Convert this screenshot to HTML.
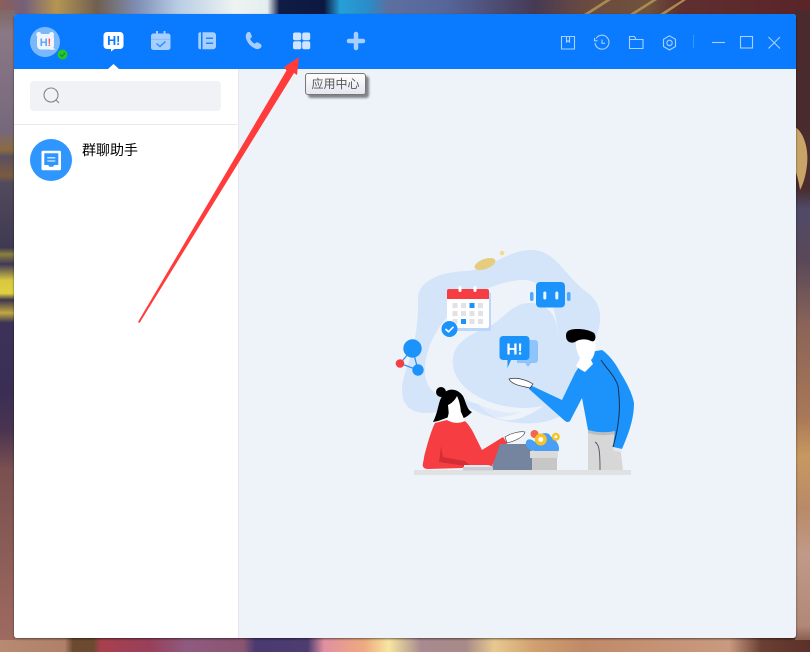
<!DOCTYPE html>
<html lang="zh">
<head>
<meta charset="utf-8">
<title>应用中心</title>
<style>
html,body{margin:0;padding:0;width:810px;height:652px;overflow:hidden;background:#5a4050;}
svg{position:absolute;left:0;top:0;display:block;}
.t{position:absolute;font-family:"Liberation Sans","Noto Sans CJK SC",sans-serif;white-space:nowrap;}
#tip{position:absolute;left:305px;top:73px;width:59px;height:20px;box-sizing:content-box;border:1px solid #777;border-radius:3px;background:linear-gradient(#fff,#e4e5f0);box-shadow:3px 3px 2px rgba(70,70,70,.65);font:12px/20px "Liberation Sans","Noto Sans CJK SC",sans-serif;color:#575757;text-align:center;}
</style>
</head>
<body>
<svg width="810" height="652" viewBox="0 0 810 652" xmlns="http://www.w3.org/2000/svg" font-family="'Liberation Sans',sans-serif">
<defs>
<linearGradient id="top" x1="0" x2="810" y1="0" y2="0" gradientUnits="userSpaceOnUse">
<stop offset="0" stop-color="#8a5f58"/><stop offset=".03" stop-color="#75607a"/><stop offset=".07" stop-color="#b59552"/><stop offset=".12" stop-color="#6f5f50"/><stop offset=".17" stop-color="#7f8fb6"/><stop offset=".22" stop-color="#b8cde4"/><stop offset=".29" stop-color="#eef3f2"/><stop offset=".33" stop-color="#e4eef0"/><stop offset=".345" stop-color="#101c44"/><stop offset=".4" stop-color="#0d1840"/><stop offset=".42" stop-color="#26a0d8"/><stop offset=".455" stop-color="#2a8cc8"/><stop offset=".48" stop-color="#5d6f9f"/><stop offset=".55" stop-color="#56669a"/><stop offset=".66" stop-color="#463a55"/><stop offset=".72" stop-color="#6a4a40"/><stop offset=".8" stop-color="#70523c"/><stop offset=".84" stop-color="#602f30"/><stop offset="1" stop-color="#5a2428"/>
</linearGradient>
<linearGradient id="bot" x1="0" x2="810" y1="0" y2="0" gradientUnits="userSpaceOnUse">
<stop offset="0" stop-color="#b88a72"/><stop offset=".08" stop-color="#b08068"/><stop offset=".09" stop-color="#6b4a30"/><stop offset=".115" stop-color="#6b4a30"/><stop offset=".125" stop-color="#a8404e"/><stop offset=".185" stop-color="#98405a"/><stop offset=".23" stop-color="#8f5a80"/><stop offset=".3" stop-color="#8a5570"/><stop offset=".315" stop-color="#4a3a70"/><stop offset=".38" stop-color="#4e3c70"/><stop offset=".4" stop-color="#e090a0"/><stop offset=".45" stop-color="#eeaa80"/><stop offset=".48" stop-color="#f8e6a0"/><stop offset=".52" stop-color="#a88a90"/><stop offset=".575" stop-color="#a88a88"/><stop offset=".61" stop-color="#e8c890"/><stop offset=".66" stop-color="#d0a070"/><stop offset=".72" stop-color="#c08a68"/><stop offset=".9" stop-color="#c99a80"/><stop offset=".94" stop-color="#6a4034"/><stop offset="1" stop-color="#5a3028"/>
</linearGradient>
<linearGradient id="lft" x1="0" x2="0" y1="0" y2="652" gradientUnits="userSpaceOnUse">
<stop offset="0" stop-color="#7d5f55"/><stop offset=".05" stop-color="#8a7886"/><stop offset=".2" stop-color="#76687c"/><stop offset=".23" stop-color="#8a6a40"/><stop offset=".24" stop-color="#5a5060"/><stop offset=".27" stop-color="#7a5a40"/><stop offset=".28" stop-color="#524a5c"/><stop offset=".38" stop-color="#3f3a52"/><stop offset=".39" stop-color="#8a8040"/><stop offset=".405" stop-color="#3f3858"/><stop offset=".43" stop-color="#d8c840"/><stop offset=".45" stop-color="#e0d040"/><stop offset=".46" stop-color="#3e3650"/><stop offset=".48" stop-color="#c0a840"/><stop offset=".495" stop-color="#3c3258"/><stop offset=".6" stop-color="#3a2e55"/><stop offset=".66" stop-color="#4a3450"/><stop offset=".72" stop-color="#7a5050"/><stop offset="1" stop-color="#a06c60"/>
</linearGradient>
<linearGradient id="rgt" x1="0" x2="0" y1="0" y2="652" gradientUnits="userSpaceOnUse">
<stop offset="0" stop-color="#4a2a2c"/><stop offset=".29" stop-color="#4a2c2e"/><stop offset=".32" stop-color="#4f4a68"/><stop offset=".4" stop-color="#5a4858"/><stop offset=".5" stop-color="#8a6458"/><stop offset=".64" stop-color="#a87858"/><stop offset=".7" stop-color="#c89860"/><stop offset=".78" stop-color="#b88a68"/><stop offset=".85" stop-color="#c09a88"/><stop offset=".96" stop-color="#b08878"/><stop offset="1" stop-color="#6a3a30"/>
</linearGradient>
<filter id="sh" x="-3%" y="-3%" width="106%" height="106%"><feDropShadow dx="0" dy="1" stdDeviation="1" flood-color="#000" flood-opacity=".55"/></filter>
<filter id="soft" x="-5%" y="-5%" width="110%" height="110%"><feGaussianBlur stdDeviation=".35"/></filter>
<clipPath id="win"><rect x="14" y="14" width="782" height="624" rx="3"/></clipPath>
</defs>

<!-- wallpaper strips -->
<rect x="0" y="0" width="810" height="15" fill="url(#top)"/>
<rect x="0" y="636" width="810" height="16" fill="url(#bot)"/>
<rect x="0" y="10" width="15" height="630" fill="url(#lft)"/>
<rect x="795" y="10" width="15" height="630" fill="url(#rgt)"/>
<path d="M795 127C804 132 809 150 807 165C806 175 803 185 800 190C799 182 797 175 795 170z" fill="#c8a468"/>
<path d="M584 14L606 0h5L589 14zM630 14L652 0h5L635 14zM660 14L682 0h4L665 14z" fill="#a98a50"/>

<!-- window -->
<rect x="14" y="14" width="782" height="624" rx="3" fill="#eef3fa" filter="url(#sh)"/>
<g clip-path="url(#win)">
<rect x="14" y="69" width="224" height="569" fill="#fff"/>
<rect x="238" y="69" width="1" height="569" fill="#e4e7ec"/>
<rect x="14" y="14" width="782" height="55" fill="#0a7bff"/>
</g>

<!-- avatar -->
<circle cx="45" cy="42" r="15" fill="#79b9fb"/>
<circle cx="38.800" cy="34.500" r="2.500" fill="#eef5fe"/>
<circle cx="51.500" cy="34.500" r="2.500" fill="#eef5fe"/>
<rect x="37" y="34" width="17" height="15.500" rx="4" fill="#eef5fe"/>
<path d="M51 46l4.500 3.500-5 .5z" fill="#eef5fe"/>
<text x="39.800" y="46" font-size="11" font-weight="700" fill="#5aa5f5">H</text>
<text x="47.500" y="46" font-size="11" font-weight="700" fill="#f25a5a">!</text>
<circle cx="62.500" cy="54.500" r="5" fill="#27c527"/>
<path d="M60 54.500l2 2 3-3.500" fill="none" stroke="#0f8a3a" stroke-width="1"/>

<!-- H! tab -->
<path d="M107 32h13a3.500 3.500 0 0 1 3.500 3.500v10a3.500 3.500 0 0 1-3.500 3.500h-5.500l-3.500 2.500V49h-4a3.500 3.500 0 0 1-3.500-3.500v-10A3.500 3.500 0 0 1 107 32z" fill="#fff"/>
<text x="113.700" y="45" font-size="12.500" font-weight="700" fill="#0a7bff" text-anchor="middle">H!</text>
<path d="M113.500 64l5.500 5h-11z" fill="#fff"/>

<!-- calendar -->
<path d="M153.500 33.500h2.500V31h2v2.500h5.500V31h2v2.500h2.500a2.500 2.500 0 0 1 2.500 2.500v11.500a2.500 2.500 0 0 1-2.500 2.500h-14.500a2.500 2.500 0 0 1-2.500-2.500V36a2.500 2.500 0 0 1 2.500-2.500z" fill="#a6cfff"/>
<path d="M151 39.200h19" stroke="#6fb0ff" stroke-width=".7"/>
<path d="M156.500 43.500l3.500 3 5.500-5" fill="none" stroke="#3d95ff" stroke-width="1.600"/>

<!-- book -->
<path d="M198.300 34.300a2 2 0 0 1 2-2h.7v17h-.7a2 2 0 0 1-2-2z M202.500 32.300H213a3 3 0 0 1 3 3v11a3 3 0 0 1-3 3h-10.500z" fill="#a6cfff"/>
<path d="M206 38.300h7M206 43.300h7" stroke="#1f86ff" stroke-width="1.500"/>

<!-- phone -->
<path d="M247 32.500c1.500-1 3-.8 3.600.6l1 2.400c.4 1 .2 1.800-.6 2.500l-.9.800c.8 2 2.800 4.200 4.600 5l1.200-1c.8-.6 1.600-.6 2.400-.2l2.200 1.400c1.300.8 1.400 2.500.2 3.700-1.400 1.400-3.400 1.800-5.500.9-4.500-1.900-8.300-6-9.300-10.800-.5-2.400.2-4.300 1.600-5.300z" fill="#a6cfff"/>

<!-- grid -->
<g fill="#cfe4ff"><rect x="293" y="32.500" width="8.300" height="7.800" rx="2"/><rect x="302.200" y="32.500" width="8" height="7.800" rx="2"/><rect x="293" y="41.300" width="8.300" height="8" rx="2"/><rect x="302.200" y="41.300" width="8" height="8" rx="2"/></g>

<!-- plus -->
<path d="M349 41h14M356 34v14" stroke="#a6cfff" stroke-width="4.500" stroke-linecap="round"/>

<!-- right icons -->
<g fill="none" stroke="#a9d0ff" stroke-width="1.100">
<path d="M561.500 36.500h13v12.500h-13z M566.500 36.500v5.500l1.500-1.300 1.500 1.300v-5.500"/>
<path d="M596 38.500a7 7 0 1 1-1 4.500M594.500 38v2.800h3M602 39.500v3.800h3"/>
<path d="M629.500 48.500v-12h5l1.500 3h7v9zM629.500 39.500h6.500"/>
<path d="M669.500 35.800l6 3.500v7.200l-6 3.500-6-3.500v-7.200z"/>
<circle cx="669.500" cy="42.900" r="2.700"/>
<path d="M712 42.500h13"/>
<rect x="740.500" y="36.500" width="12" height="11.500"/>
<path d="M768.500 37l11.500 11.500M780 37l-11.500 11.500"/>
</g>
<rect x="693" y="35" width="1" height="13" fill="#3a95fb"/>

<!-- search -->
<rect x="30" y="81" width="191" height="30" rx="4" fill="#f0f2f5"/>
<circle cx="51" cy="95" r="7" fill="none" stroke="#83868c" stroke-width="1.100"/>
<path d="M56 100l3 3" stroke="#83868c" stroke-width="1.100"/>
<rect x="14" y="124" width="223" height="1" fill="#e9e9ea"/>

<!-- list avatar -->
<circle cx="51" cy="160" r="21" fill="#2f95ff"/>
<rect x="41.500" y="150.700" width="19.500" height="19.500" rx="1.500" fill="#fff"/>
<path d="M44.300 153.300h14v11.700h-4l-1.300 1.800h-3.500l-1.300-1.800h-3.900z" fill="#2f95ff"/>
<path d="M47.300 157.800h8M47.300 161h8" stroke="#fff" stroke-width="1.100"/>

<!-- illustration -->
<g filter="url(#soft)">
<path d="M418 300C417 281 440 272 466 271C490 270 506 250 532 250C556 250 566 278 588 293C604 305 603 326 592 345C586 362 596 380 582 398C566 420 538 428 505 421C478 416 470 400 446 409C425 417 403 414 402 392C401 372 419 352 418 300z" fill="#d4e4f9"/>
<path d="M425 366C428 330 462 287 520 280C545 278 556 304 558 335L552 400C520 424 500 428 478 404L440 396C428 390 424 380 425 366z" fill="#eef3fa"/>
<path d="M453 357C456 340 474 333 490 326C505 318 512 302 532 303C552 305 558 320 558 340C563 368 588 375 566 395C545 412 512 410 490 402C468 394 450 378 453 357z" fill="#d4e4f9"/>
<path d="M425 366C424 380 428 390 440 396L462 398C480 404 495 415 520 412C505 420 482 419 472 408C460 398 440 408 428 404C416 398 418 380 425 366z" fill="#d4e4f9" opacity=".55"/>

<!-- saturn / dot -->
<ellipse cx="485" cy="264" rx="11" ry="5" transform="rotate(-20 485 264)" fill="#e6cd7e"/>
<circle cx="502" cy="253" r="2.300" fill="#f5dc8d"/>

<!-- calendar -->
<rect x="449" y="292" width="42" height="39" rx="2" fill="#bcd6f9"/>
<rect x="447" y="289" width="42" height="39" rx="2" fill="#fff"/>
<path d="M447 299v-8a2 2 0 0 1 2-2h38a2 2 0 0 1 2 2v8z" fill="#f63d43"/>
<rect x="458.500" y="286" width="3" height="6" rx="1.500" fill="#fff"/>
<rect x="473.500" y="286" width="3" height="6" rx="1.500" fill="#fff"/>
<g fill="#e0e2e6">
<rect x="452.500" y="303" width="5" height="5"/><rect x="461" y="303" width="5" height="5"/><rect x="478" y="303" width="5" height="5"/>
<rect x="452.500" y="311" width="5" height="5"/><rect x="461" y="311" width="5" height="5"/><rect x="469.500" y="311" width="5" height="5"/><rect x="478" y="311" width="5" height="5"/>
<rect x="452.500" y="319" width="5" height="5"/><rect x="469.500" y="319" width="5" height="5"/><rect x="478" y="319" width="5" height="5"/>
</g>
<rect x="469.500" y="303" width="5" height="5" fill="#1e93fb"/>
<rect x="461" y="319" width="5" height="5" fill="#1e93fb"/>
<circle cx="449.500" cy="329" r="8" fill="#1e93fb"/>
<path d="M445.500 329l3 2.800 5-5" fill="none" stroke="#fff" stroke-width="1.600"/>

<!-- robot -->
<rect x="536" y="282" width="29" height="25.500" rx="4" fill="#1e93fb"/>
<rect x="530" y="292" width="3.500" height="9" rx="1.700" fill="#4ea9fc"/>
<rect x="567" y="292" width="3.500" height="9" rx="1.700" fill="#4ea9fc"/>
<rect x="543.300" y="291.500" width="3" height="8" rx="1.500" fill="#eaf4ff"/>
<rect x="555.300" y="291.500" width="3" height="8" rx="1.500" fill="#eaf4ff"/>

<!-- H! bubble -->
<path d="M517 340h18a3 3 0 0 1 3 3v17a3 3 0 0 1-3 3h-4l-3 4-3-4h-8z" fill="#8cc4fb"/>
<path d="M503 336h23a3.500 3.500 0 0 1 3.500 3.500v17a3.500 3.500 0 0 1-3.500 3.500h-15l-3.500 8v-8H503a3.500 3.500 0 0 1-3.500-3.500v-17A3.500 3.500 0 0 1 503 336z" fill="#1e93fb"/>
<text x="514.500" y="354.500" font-size="15.500" font-weight="700" fill="#fff" text-anchor="middle">H!</text>

<!-- network -->
<path d="M412.500 349L400 363.500L418 370L412.500 349" fill="none" stroke="#2b93f5" stroke-width="1.300"/>
<circle cx="412.500" cy="348.500" r="9.200" fill="#1e93fb"/>
<circle cx="400" cy="363.500" r="4.300" fill="#f63d43"/>
<circle cx="418" cy="370" r="5.700" fill="#1e93fb"/>

<!-- table -->
<rect x="414" y="470" width="217" height="5" fill="#e0e1e3"/>

<!-- man legs -->
<path d="M588 428h30l5 42h-35z" fill="#d7d7d7"/>
<path d="M595 442c4 2 5 8 5 28" fill="none" stroke="#5a5e68" stroke-width="1"/>
<path d="M588 430q14 4 27 1v3q-14 3-27-1z" fill="#bdbdbd"/>

<!-- man hoodie -->
<path d="M582 362L575 373L562 400L530 385L529 389L565 421Q568 423 570 421L582 398L588 430Q602 434 615 431L613 447L622 449C628 435 634 420 634 403C632 392 625 380 620 372C615 362 608 354 602 350L590 352z" fill="#1e93fb"/>
<path d="M601 360C606 368 615 376 618 386C620 400 620 412 618 424C617 432 615 440 613 447" fill="none" stroke="#19314f" stroke-width="1"/>
<path d="M613 447l9 2-1 3-7-1z" fill="#e8e8e8"/>
<path d="M509 379C515 377 525 379 533 384L530 388C522 386 512 385 509 379z" fill="#fff" stroke="#333" stroke-width=".7"/>
<!-- man head -->
<path d="M576 340H595C596 348 595 356 591 360L593 364L585 372C581 370 578 368 576 366L580 358C577 352 575 346 576 340z" fill="#fff"/>
<path d="M570 330C576 328 588 329 594 333C597 337 595 343 591 341C585 338 579 339 575 342C570 344 566 341 566 336C566 333 567 331 570 330z" fill="#000"/>

<!-- woman top -->
<path d="M447 420Q456 425 465 421C468 424 471 428 473 432L482 450L503 437L507 443L491 467L463 468L428 469C424 469 422 467 423 463C424 459 424 456 425 453C428 442 431 431 435 423z" fill="#f63d43"/>
<path d="M441 446L443 457L465 461L472 467L439 462z" fill="#d42e34"/>
<path d="M505 437C511 433 520 431 525 432C524 437 515 441 507 443z" fill="#fff" stroke="#333" stroke-width=".6"/>
<path d="M464 465h24c4 0 5 5 3 5h-27z" fill="#e8e8e8"/>
<!-- woman head -->
<circle cx="441" cy="392" r="5" fill="#000"/>
<path d="M441 398C438 404 438 412 433 422C440 421 445 418 449 417L461 418C464 419 468 416 472 412C467 410 466 402 463 396C458 389 450 388 445 392z" fill="#000"/>
<path d="M447 420Q456 425 465 421L461 412H449z" fill="#fff"/>
<path d="M448 405C452 403 455 400 457 396C460 402 461 410 461 415L460 418C458 420 452 419 449 416z" fill="#fff"/>

<!-- laptop -->
<path d="M500 444H532V470H491z" fill="#74849f"/>
<rect x="463" y="467" width="30" height="3.500" fill="#c9ced6"/>

<!-- flowers -->
<path d="M526 442C527 438 532 439 535 442C536 436 543 431 549 434C551 437 553 438 556 441C559 445 560 449 558 452C553 454 535 452 531 450C527 448 525 445 526 442z" fill="#4a9ff5"/>
<circle cx="534.500" cy="434" r="4" fill="#f0684a"/>
<circle cx="540.800" cy="439.500" r="6" fill="#f7c326"/>
<circle cx="540.800" cy="439.500" r="2.500" fill="#fff"/>
<circle cx="555.800" cy="436.800" r="4" fill="#f7c326"/>
<circle cx="555.800" cy="436.800" r="1.500" fill="#fff"/>
<!-- pot -->
<rect x="530" y="451" width="28" height="7" fill="#dbdbdb"/>
<rect x="532" y="458" width="25" height="12" fill="#c7c7c7"/>
</g>

<!-- red arrow -->
<path d="M138 322L286.500 70.500L284 67L299 57L297 75L294 73L139.500 323z" fill="#ff3b3b"/>
</svg>

<div class="t" style="left:82px;top:141px;font-size:14px;line-height:18px;color:#000;">群聊助手</div>
<div id="tip">应用中心</div>
</body>
</html>
